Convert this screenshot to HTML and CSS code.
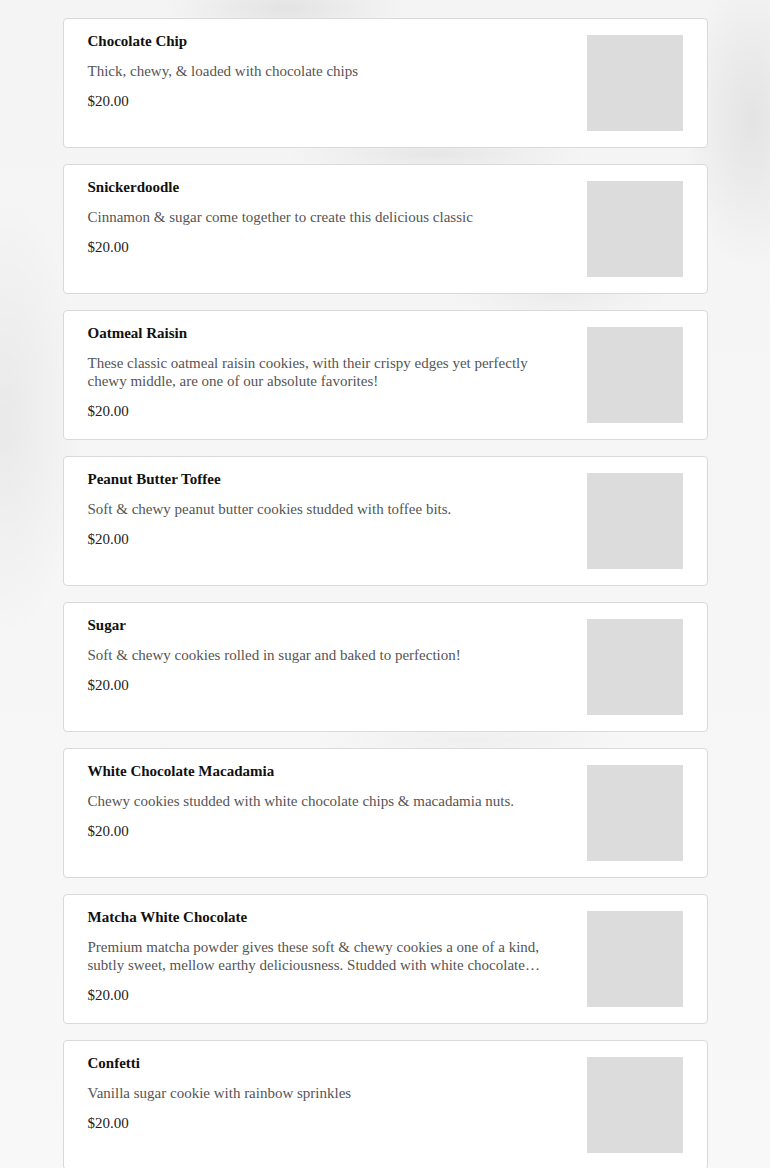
FILE: index.html
```html
<!DOCTYPE html>
<html lang="en">
<head>
    <meta charset="UTF-8">
    <meta name="viewport" content="width=device-width, initial-scale=1.0">
    <title>Cookies</title>
    <link rel="stylesheet" href="styles.css">
</head>
<body>
    <div class="menu">
        <div class="item">
            <div class="item-text">
                <h3 class="item-name">Chocolate Chip</h3>
                <p class="item-desc">Thick, chewy, &amp; loaded with chocolate chips</p>
                <p class="item-price">$20.00</p>
            </div>
            <div class="item-image"></div>
        </div>

        <div class="item">
            <div class="item-text">
                <h3 class="item-name">Snickerdoodle</h3>
                <p class="item-desc">Cinnamon &amp; sugar come together to create this delicious classic</p>
                <p class="item-price">$20.00</p>
            </div>
            <div class="item-image"></div>
        </div>

        <div class="item">
            <div class="item-text">
                <h3 class="item-name">Oatmeal Raisin</h3>
                <p class="item-desc">These classic oatmeal raisin cookies, with their crispy edges yet perfectly chewy middle, are one of our absolute favorites!</p>
                <p class="item-price">$20.00</p>
            </div>
            <div class="item-image"></div>
        </div>

        <div class="item">
            <div class="item-text">
                <h3 class="item-name">Peanut Butter Toffee</h3>
                <p class="item-desc">Soft &amp; chewy peanut butter cookies studded with toffee bits.</p>
                <p class="item-price">$20.00</p>
            </div>
            <div class="item-image"></div>
        </div>

        <div class="item">
            <div class="item-text">
                <h3 class="item-name">Sugar</h3>
                <p class="item-desc">Soft &amp; chewy cookies rolled in sugar and baked to perfection!</p>
                <p class="item-price">$20.00</p>
            </div>
            <div class="item-image"></div>
        </div>

        <div class="item">
            <div class="item-text">
                <h3 class="item-name">White Chocolate Macadamia</h3>
                <p class="item-desc">Chewy cookies studded with white chocolate chips &amp; macadamia nuts.</p>
                <p class="item-price">$20.00</p>
            </div>
            <div class="item-image"></div>
        </div>

        <div class="item">
            <div class="item-text">
                <h3 class="item-name">Matcha White Chocolate</h3>
                <p class="item-desc">Premium matcha powder gives these soft &amp; chewy cookies a one of a kind, subtly sweet, mellow earthy deliciousness. Studded with white chocolate…</p>
                <p class="item-price">$20.00</p>
            </div>
            <div class="item-image"></div>
        </div>

        <div class="item">
            <div class="item-text">
                <h3 class="item-name">Confetti</h3>
                <p class="item-desc">Vanilla sugar cookie with rainbow sprinkles</p>
                <p class="item-price">$20.00</p>
            </div>
            <div class="item-image"></div>
        </div>
    </div>
</body>
</html>
```

FILE: styles.css
```css
html, body {
    margin: 0;
    padding: 0;
}

body {
    font-family: "Liberation Serif", "DejaVu Serif", serif;
    color: #1a1a1a;
    min-height: 1168px;
    background-color: #f6f6f6;
    /* soft blurred shapes behind the cards */
    background-image:
        radial-gradient(ellipse 120px 32px at 285px 8px, rgba(0, 0, 0, 0.07), transparent),
        radial-gradient(ellipse 150px 22px at 435px 154px, rgba(0, 0, 0, 0.06), transparent),
        radial-gradient(ellipse 70px 150px at 752px 120px, rgba(0, 0, 0, 0.07), transparent),
        radial-gradient(ellipse 110px 24px at 560px 296px, rgba(0, 0, 0, 0.04), transparent),
        radial-gradient(ellipse 80px 220px at 5px 420px, rgba(0, 0, 0, 0.05), transparent),
        radial-gradient(ellipse 160px 20px at 470px 740px, rgba(0, 0, 0, 0.03), transparent),
        linear-gradient(#f4f4f4, #f8f8f8);
}

.menu {
    width: 645px;
    margin: 0 auto;
    padding: 18px 0 0 0;
    display: flex;
    flex-direction: column;
    gap: 16px;
}

.item {
    display: flex;
    justify-content: space-between;
    gap: 32px;
    background-color: #fff;
    border: 1px solid #d9d9d9;
    border-radius: 4px;
    padding: 16px 24px;
}

.item-text {
    flex: 1;
    min-width: 0;
    margin-top: -3px;
}

.item-name {
    margin: 0;
    font-size: 15px;
    font-weight: bold;
    line-height: 18px;
    color: #111;
}

.item-desc {
    margin: 12px 0 0 0;
    font-size: 15px;
    line-height: 18px;
    color: #555;
}

.item-price {
    margin: 12px 0 0 0;
    font-size: 15px;
    line-height: 18px;
    color: #222;
}

.item-image {
    flex: none;
    width: 96px;
    height: 96px;
    background-color: #dcdcdc;
}
```
